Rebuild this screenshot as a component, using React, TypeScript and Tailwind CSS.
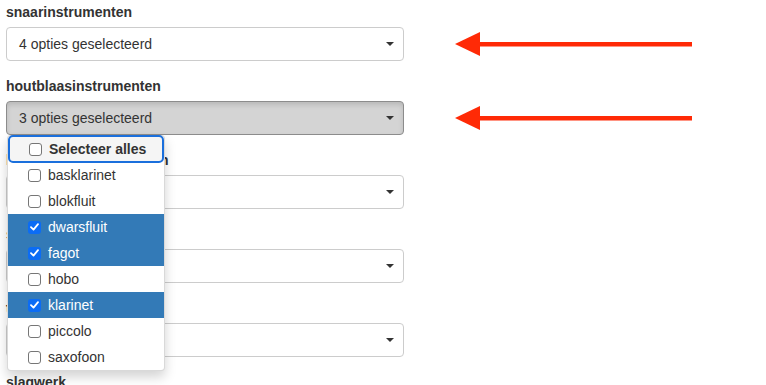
import { ReactNode } from 'react';

// Red annotation arrow pointing left
const Arrow = () => (
  <svg width="237" height="26" viewBox="0 0 237 26" className="shrink-0">
    <polygon points="0,13 25,1 25,25" fill="#ff2a06" />
    <rect x="24" y="11" width="213" height="4.5" fill="#ff2a06" />
  </svg>
);

const Caret = () => (
  <span className="w-0 h-0 border-l-[4px] border-r-[4px] border-t-[4px] border-l-transparent border-r-transparent border-t-[#333]" />
);

const SelectBox = ({ text, open }: { text: string; open?: boolean }) => (
  <div
    className={`w-[398px] h-[34px] flex items-center justify-between pl-3 pr-[9px] rounded border text-sm ${
      open
        ? 'bg-[#d4d4d4] border-[#8c8c8c] shadow-[inset_0_3px_5px_rgba(0,0,0,0.125)]'
        : 'bg-white border-[#cccccc]'
    }`}
  >
    <span>{text}</span>
    <Caret />
  </div>
);

const Group = ({ label, children, arrow }: { label: string; children: ReactNode; arrow?: boolean }) => (
  <div className="mb-[15px]">
    <div className="h-5 leading-5 font-bold text-sm mb-[5px]">{label}</div>
    <div className="flex items-center gap-[51px]">
      {children}
      {arrow && <Arrow />}
    </div>
  </div>
);

const CheckBox = ({ checked }: { checked: boolean }) =>
  checked ? (
    <span className="w-[13px] h-[13px] rounded-[3px] bg-[#0b6cf5] flex items-center justify-center shrink-0">
      <svg width="9" height="8" viewBox="0 0 9 8">
        <path d="M1 4.2 L3.5 6.6 L8 1.2" stroke="white" strokeWidth="1.8" fill="none" strokeLinecap="round" strokeLinejoin="round" />
      </svg>
    </span>
  ) : (
    <span className="w-[13px] h-[13px] rounded-[3px] border border-[#767676] bg-white shrink-0" />
  );

const options = [
  { name: 'basklarinet', checked: false },
  { name: 'blokfluit', checked: false },
  { name: 'dwarsfluit', checked: true },
  { name: 'fagot', checked: true },
  { name: 'hobo', checked: false },
  { name: 'klarinet', checked: true },
  { name: 'piccolo', checked: false },
  { name: 'saxofoon', checked: false },
];

export default function App() {
  return (
    <div
      className="w-[766px] h-[385px] overflow-hidden bg-white text-[#333] pt-[2px] pl-[6px]"
      style={{ fontFamily: '"Liberation Sans", Arial, sans-serif' }}
    >
      <Group label="snaarinstrumenten" arrow>
        <SelectBox text="4 opties geselecteerd" />
      </Group>
      <Group label="houtblaasinstrumenten" arrow>
        <div className="relative">
          <SelectBox text="3 opties geselecteerd" open />
          {/* Open dropdown menu */}
          <div className="absolute left-[1px] top-[34px] z-10 w-[158px] bg-white border border-black/15 rounded shadow-[0_6px_12px_rgba(0,0,0,0.175)] text-sm">
            <div className="h-[26px] flex items-center gap-[7px] pl-5 bg-[#f5f5f5] font-bold rounded-[4px] outline-2 outline-[#1a6fdc] -outline-offset-1 mx-[1px] mt-[0px]">
              <CheckBox checked={false} />
              <span>Selecteer alles</span>
            </div>
            {options.map((o) => (
              <div
                key={o.name}
                className={`h-[26px] flex items-center gap-[7px] pl-5 ${
                  o.checked ? 'bg-[#337ab7] text-white' : ''
                }`}
              >
                <CheckBox checked={o.checked} />
                <span>{o.name}</span>
              </div>
            ))}
          </div>
        </div>
      </Group>
      <Group label="koperblaasinstrumenten">
        <SelectBox text="2 opties geselecteerd" />
      </Group>
      <Group label="strijkinstrumenten">
        <SelectBox text="1 optie geselecteerd" />
      </Group>
      <Group label="toetsinstrumenten">
        <SelectBox text="Niets geselecteerd" />
      </Group>
      <Group label="slagwerk">
        <SelectBox text="Niets geselecteerd" />
      </Group>
    </div>
  );
}
